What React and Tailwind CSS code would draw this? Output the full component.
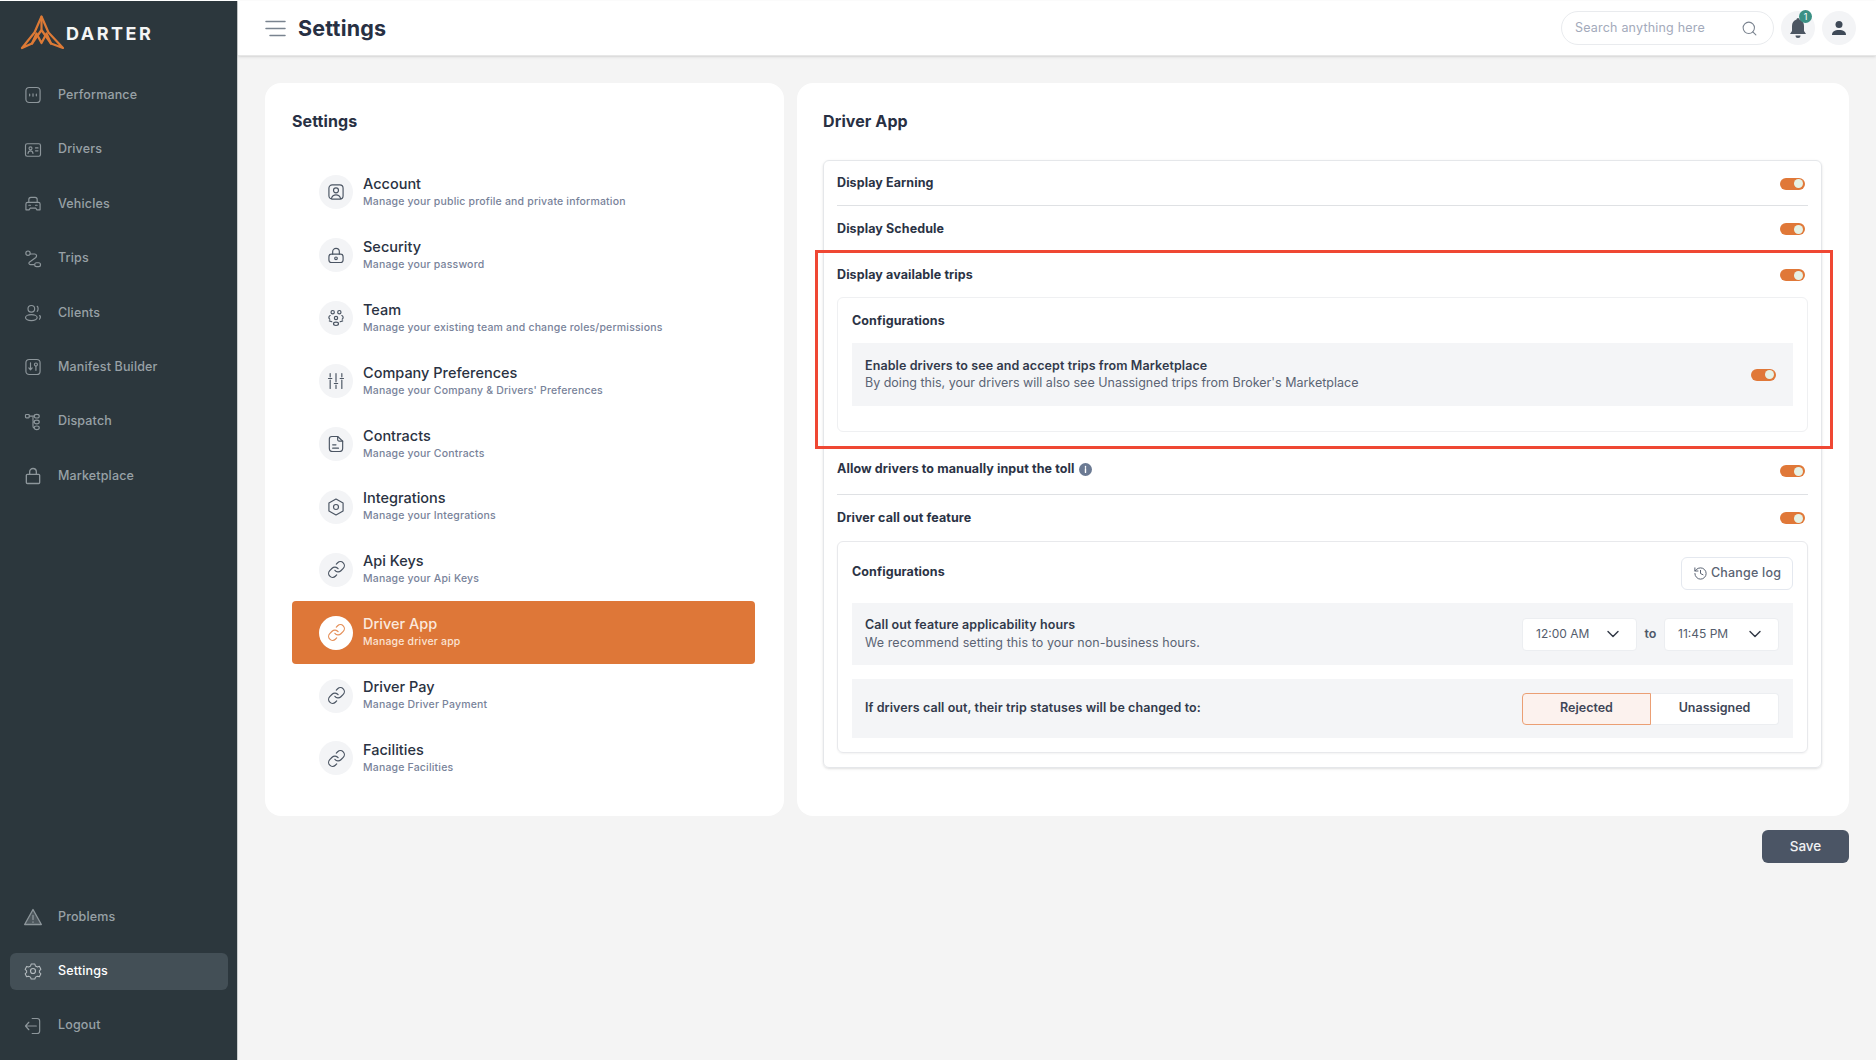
import React from "react";
import { Search, ChevronDown, History, Link } from "lucide-react";

const S = ({ children, size = 20, className = "", sw = 1.4 }) => (
  <svg width={size} height={size} viewBox="0 0 24 24" fill="none" stroke="currentColor" strokeWidth={sw} strokeLinecap="round" strokeLinejoin="round" className={className}>
    {children}
  </svg>
);

const Logo = () => (
  <svg width="44" height="36" viewBox="0 0 44 36" fill="none" stroke="#dd7a36" strokeWidth="2.2" strokeLinejoin="round" strokeLinecap="round">
    <path d="M2 33 L14.500 17.500 L21.500 1.500 L28.500 17.500 L43 33 L31 28.500 L21.500 15 L12 28.500 Z" />
    <path d="M12 28.500 L16.500 18.500 L21.500 28 L26.500 18.500 L31 28.500" />
    <path d="M21.500 2 L21.500 14" />
  </svg>
);

const navIcons = {
  Performance: <S><rect x="3.5" y="3" width="17" height="18" rx="4" /><path d="M8 11v2M12 10.5v3M16 11v2" /></S>,
  Drivers: <S><rect x="3" y="4.5" width="18" height="15" rx="2" /><circle cx="9" cy="10" r="1.8" /><path d="M6 16c.3-2 1.5-3 3-3s2.7 1 3 3M15 9.5h3M15 13h3" /></S>,
  Vehicles: <S><path d="M7 10V6.500C7 5 8 4 9.500 4h5C16 4 17 5 17 6.500V10" /><path d="M3.500 12c0-1.200.8-2 2-2h13c1.200 0 2 .8 2 2v7h-4l-1-2h-7l-1 2h-4z" /><path d="M7 13.500h2M15 13.500h2" /></S>,
  Trips: <S><circle cx="6" cy="5" r="2.600" /><rect x="14" y="16.500" width="7" height="4.600" rx="2.300" /><path d="M9 6h5c2.500 0 3 3 1 4.500l-7 5c-1.500 1.200-1 3.300 1 3.300h4" /></S>,
  Clients: <S><circle cx="10" cy="7" r="4" /><ellipse cx="10" cy="17.500" rx="7" ry="3.600" /><path d="M17 4c1.500 1 1.500 4.500 0 6M20 15c1 1 1 3-.2 4.500" /></S>,
  "Manifest Builder": <S><rect x="3.500" y="3" width="17" height="18" rx="4" /><path d="M9 7v8M7 13l2 2.500 2-2.500" /><circle cx="15.500" cy="9" r="1.800" /><path d="M15.500 11v5" /></S>,
  Dispatch: <S><rect x="3" y="3" width="4.500" height="4" rx="1" /><path d="M7.500 5h6" /><ellipse cx="16.500" cy="5" rx="3" ry="2.200" /><ellipse cx="16.500" cy="12" rx="3" ry="2.200" /><ellipse cx="16.500" cy="19" rx="3" ry="2.200" /><path d="M12 6v5c0 .8.5 1 1.500 1M12 12v5c0 1 .5 2 1.500 2" /></S>,
  Marketplace: <S sw={1.6}><path d="M8 10V7a4 4 0 0 1 8 0v3" /><rect x="4" y="10" width="16" height="11" rx="1.200" /></S>,
  Problems: <S sw={1.6}><path d="M12 3 22 21H2z" fill="currentColor" fillOpacity="0.35" /><path d="M12 10v5M12 18v.4" /></S>,
  Settings: <S><path d="M9.500 3h5l.8 2.600 2.600 1.200 2.600-.8 2 4-2 1.900v2.200l2 1.900-2 4-2.600-.8-2.600 1.200-.8 2.600h-5l-.8-2.600-2.600-1.200-2.600.8-2-4 2-1.900V12l-2-1.900 2-4 2.600.8 2.600-1.200z" transform="translate(1.200 1) scale(.9)" /><circle cx="12" cy="12" r="3" /></S>,
  Logout: <S><path d="M11 3h6c2 0 3 1 3 3v12c0 2-1 3-3 3h-6" /><path d="M16 12H3M7 7.500 3 12l4 4.500" /></S>,
};

const NavItem = ({ label, active }) => (
  <div className="h-[54.45px] flex items-center">
    <div className={`w-[218px] h-[37px] ml-[10px] rounded-md flex items-center pl-[13px] gap-[15px] ${active ? "bg-[#434f56] text-white" : "text-[#98a1a6]"}`}>
      <span className={active ? "text-[#b4bbbf]" : "text-[#8d969b]"}>{navIcons[label]}</span>
      <span className="text-[12.5px] font-medium tracking-[0.15px]">{label}</span>
    </div>
  </div>
);

const rowIcons = {
  Account: <S><rect x="3.500" y="3.500" width="17" height="17" rx="4" /><circle cx="12" cy="10" r="3" /><path d="M6.500 20c.8-3 2.800-4.500 5.500-4.500s4.700 1.500 5.500 4.500" /></S>,
  Security: <S><path d="M8 11V8a4 4 0 0 1 8 0v3" /><rect x="3.500" y="11" width="17" height="10" rx="3" /><circle cx="12" cy="16" r="1.600" /></S>,
  Team: <S><circle cx="8" cy="5" r="2" /><circle cx="16" cy="5" r="2" /><circle cx="12" cy="12" r="2" /><ellipse cx="12" cy="19" rx="3" ry="2" /><path d="M5 9C3 10 3 12 4.500 13.500M19 9c2 1 2 3 .5 4.500M4 15.500l3 1M20 15.500l-3 1" /></S>,
  "Company Preferences": <S><path d="M5 3v4M5 11v10M12 3v10M12 17v4M19 3v4M19 11v10M3 9h4M10 15h4M17 9h4" /></S>,
  Contracts: <S><path d="M7 3h7v4c0 1 .5 1.500 1.500 1.500H20V17c0 2.500-1.500 4-4 4H8c-2.500 0-4-1.500-4-4V6c0-2 1-3 3-3z" /><path d="M14 3l6 5.500M8 13h4M8 17h7" /></S>,
  Integrations: <S><path d="M12 2.500 20.500 7.200v9.600L12 21.500l-8.500-4.700V7.200z" /><circle cx="12" cy="12" r="3" /></S>,
};

const settings = [
  ["Account", "Manage your public profile and private information"],
  ["Security", "Manage your password"],
  ["Team", "Manage your existing team and change roles/permissions"],
  ["Company Preferences", "Manage your Company & Drivers' Preferences"],
  ["Contracts", "Manage your Contracts"],
  ["Integrations", "Manage your Integrations"],
  ["Api Keys", "Manage your Api Keys"],
  ["Driver App", "Manage driver app", true],
  ["Driver Pay", "Manage Driver Payment"],
  ["Facilities", "Manage Facilities"],
];

const SettingRow = ({ title, sub, active }) => (
  <div className={`h-[62.9px] flex items-center pl-[27px] gap-[10px] rounded ${active ? "bg-[#de7738] text-white" : ""}`}>
    <div className={`w-[34px] h-[34px] rounded-full flex items-center justify-center ${active ? "bg-white text-[#e5905a]" : "bg-[#f3f4f6] text-[#4b5563]"}`}>
      {rowIcons[title] || <Link size={19} strokeWidth={1.5} />}
    </div>
    <div className="flex flex-col">
      <span className={`text-[14.5px] leading-[18px] font-medium tracking-[0px] ${active ? "text-[#fbe9dd]" : "text-[#2a3242]"}`}>{title}</span>
      <span className={`text-[10.5px] leading-[17px] font-medium tracking-[0.18px] ${active ? "text-[#fbe3d3]" : "text-[#79839a]"}`}>{sub}</span>
    </div>
  </div>
);

const Toggle = () => (
  <div className="w-[25.5px] h-3 rounded-full bg-[#e07838] flex items-center justify-end pr-[2px] shrink-0">
    <div className="w-[9px] h-[9px] rounded-full bg-[#e6f2e6]" />
  </div>
);

const Label = ({ children, className = "" }) => (
  <span className={`text-[12.5px] font-bold text-[#2b3345] tracking-[0.1px] ${className}`}>{children}</span>
);

const Select = ({ value, w }) => (
  <div className={`${w} h-[33px] bg-white rounded border border-[#eceef1] flex items-center justify-between pl-[13px] pr-[13px] text-[12px] text-[#545d6c]`}>
    <span>{value}</span>
    <ChevronDown size={20} strokeWidth={1.7} className="text-[#333a47]" />
  </div>
);

export default function App() {
  return (
    <div className="relative w-[1876px] h-[1062px] overflow-hidden bg-white" style={{ fontFamily: "Inter, 'Liberation Sans', sans-serif" }}>
      <div className="flex h-[1059px] mt-px">
        <aside className="w-[238px] shrink-0 bg-[#2c373d] flex flex-col justify-between border-r border-[#c9cccd]">
          <div>
            <div className="h-[67px] flex items-center pl-[20px] pb-[3px] gap-[2px]">
              <Logo />
              <span className="text-[18px] font-bold text-[#f4f5f5] tracking-[2.500px] mt-[1px]">DARTER</span>
            </div>
            {["Performance", "Drivers", "Vehicles", "Trips", "Clients", "Manifest Builder", "Dispatch", "Marketplace"].map((l) => (
              <NavItem key={l} label={l} />
            ))}
          </div>
          <div className="pb-[7px]">
            <NavItem label="Problems" />
            <NavItem label="Settings" active />
            <NavItem label="Logout" />
          </div>
        </aside>

        <div className="flex-1 flex flex-col bg-[#f4f4f4] min-w-0">
          <header className="h-[55px] shrink-0 bg-white border-b border-[#e7e7e7] shadow-sm flex items-center pl-[27px] pr-[20px]">
            <svg width="21" height="17" viewBox="0 0 21 17" stroke="#79838f" strokeWidth="1.5" strokeLinecap="round">
              <path d="M1 1.500h19M1 8.500h19M5 15.500h15" />
            </svg>
            <h1 className="ml-[12px] mt-[1px] text-[21.5px] font-bold text-[#283043] tracking-[0.2px]">Settings</h1>
            <div className="ml-auto flex items-center gap-[7px]">
              <div className="w-[213px] h-[34px] rounded-full border border-[#e9ebee] flex items-center justify-between pl-[13px] pr-[15px] text-[12.5px] text-[#a3aabb] tracking-[0.2px]">
                <span>Search anything here</span>
                <Search size={17} strokeWidth={1.5} className="text-[#7b8490]" />
              </div>
              <div className="relative w-[34px] h-[34px] rounded-full bg-[#f3f4f6] flex items-center justify-center">
                <svg width="20" height="22" viewBox="0 0 20 22" fill="#4c5662">
                  <path d="M10 1a1.500 1.500 0 0 1 1.500 1.500C14.500 3.300 16 6 16 9v5l2 3H2l2-3V9c0-3 1.500-5.700 4.500-6.500A1.500 1.500 0 0 1 10 1z" />
                  <path d="M7.500 18.500h5a2.500 2.500 0 0 1-5 0z" />
                </svg>
                <span className="absolute -top-[1px] right-[3px] w-[13px] h-[13px] rounded-full bg-[#3a9084] text-white text-[9px] leading-[13px] text-center">1</span>
              </div>
              <div className="w-[34px] h-[34px] rounded-full bg-[#f3f4f6] flex items-center justify-center">
                <svg width="16" height="16" viewBox="0 0 16 16" fill="#3e4957">
                  <circle cx="8" cy="4.500" r="3.500" />
                  <path d="M1 15c0-3.500 2.500-5 7-5s7 1.500 7 5z" />
                </svg>
              </div>
            </div>
          </header>

          <main className="flex-1 px-[27px] pt-[27px]">
            <div className="grid grid-cols-[519px_1fr] gap-[13px] h-[733px]">
              <section className="bg-white rounded-2xl pl-[27px] pr-[29px] pt-[27px]">
                <h2 className="text-[16px] leading-[22px] font-bold text-[#283043] tracking-[0.1px]">Settings</h2>
                <div className="mt-[29px]">
                  {settings.map(([t, s, a]) => (
                    <SettingRow key={t} title={t} sub={s} active={a} />
                  ))}
                </div>
              </section>

              <section className="bg-white rounded-2xl pl-[26px] pr-[27px] pt-[27px]">
                <h2 className="text-[16px] leading-[22px] font-bold text-[#283043] tracking-[0.1px]">Driver App</h2>
                <div className="mt-[28px] border border-[#e5e7ea] rounded-md shadow-sm px-[13px] h-[608px]">
                  <div className="h-[45px] flex items-center justify-between border-b border-[#dfe1e4] pr-[3px] pt-[1px]">
                    <Label>Display Earning</Label>
                    <Toggle />
                  </div>
                  <div className="h-[46px] flex items-center justify-between pr-[3px]">
                    <Label>Display Schedule</Label>
                    <Toggle />
                  </div>
                  <div className="h-[45px] flex items-center justify-between pr-[3px] pt-[1px]">
                    <Label>Display available trips</Label>
                    <Toggle />
                  </div>
                  <div className="h-[135px] border border-[#eff0f2] rounded-md px-[14px]">
                    <div className="h-[45px] flex items-center pt-[1px]"><Label>Configurations</Label></div>
                    <div className="h-[63px] bg-[#f4f5f7] flex items-center justify-between pl-[13px] pr-[17px]">
                      <div className="flex flex-col">
                        <span className="text-[12.5px] leading-[18px] font-semibold text-[#323a4b] tracking-[0.09px]">Enable drivers to see and accept trips from Marketplace</span>
                        <span className="text-[12.5px] leading-[18px] text-[#5b6474] -mt-px">By doing this, your drivers will also see Unassigned trips from Broker's Marketplace</span>
                      </div>
                      <Toggle />
                    </div>
                  </div>
                  <div className="h-[63px] border-b border-[#dfe1e4] flex items-center justify-between pt-[16px] pr-[3px]">
                    <div className="flex items-center gap-[5px] -mt-[3px]">
                      <Label>Allow drivers to manually input the toll</Label>
                      <svg width="13" height="13" viewBox="0 0 13 13">
                        <circle cx="6.500" cy="6.500" r="6.500" fill="#6b7a93" />
                        <path d="M6.500 5.800v3.600M6.500 3.400v.8" stroke="#fff" strokeWidth="1.400" strokeLinecap="round" />
                      </svg>
                    </div>
                    <Toggle />
                  </div>
                  <div className="h-[46px] flex items-center justify-between pr-[3px]">
                    <Label>Driver call out feature</Label>
                    <Toggle />
                  </div>
                  <div className="h-[212px] border border-[#e8e9ec] rounded-md px-[14px] shadow-xs">
                    <div className="h-[61px] flex items-center justify-between">
                      <Label>Configurations</Label>
                      <div className="w-[112px] h-[33px] mt-[2px] border border-[#e4e8ef] rounded-md flex items-center justify-center gap-[3px] text-[12.5px] font-medium text-[#5a6373] tracking-[0.2px]">
                        <History size={15} strokeWidth={1.6} />
                        <span>Change log</span>
                      </div>
                    </div>
                    <div className="h-[62px] bg-[#f4f5f7] flex items-center justify-between pl-[13px] pr-[14px]">
                      <div className="flex flex-col">
                        <span className="text-[12.5px] leading-[18px] font-semibold text-[#323a4b] tracking-[0.09px]">Call out feature applicability hours</span>
                        <span className="text-[12.5px] leading-[18px] text-[#5b6474] tracking-[0.08px]">We recommend setting this to your non-business hours.</span>
                      </div>
                      <div className="flex items-center">
                        <Select value="12:00 AM" w="w-[115px]" />
                        <span className="w-[27px] text-center text-[12.5px] font-semibold text-[#4f5869]">to</span>
                        <Select value="11:45 PM" w="w-[115px]" />
                      </div>
                    </div>
                    <div className="h-[59px] mt-[14px] bg-[#f4f5f7] flex items-center justify-between pl-[13px] pr-[14px]">
                      <span className="text-[12.5px] font-semibold text-[#323a4b] tracking-[0.08px]">If drivers call out, their trip statuses will be changed to:</span>
                      <div className="w-[257px] h-[32px] flex text-[12.5px] font-semibold text-[#3e4657]">
                        <div className="w-[129px] bg-[#fcf2ee] border border-[#eb9f74] rounded-l flex items-center justify-center">Rejected</div>
                        <div className="flex-1 bg-white border-y border-r border-[#eceef1] rounded-r flex items-center justify-center">Unassigned</div>
                      </div>
                    </div>
                  </div>
                </div>
              </section>
            </div>
            <div className="flex justify-end mt-[14px]">
              <button className="w-[87px] h-[33px] bg-[#4b5565] rounded-md text-[13.5px] font-medium text-[#f0f1f3]">Save</button>
            </div>
          </main>
        </div>
      </div>
      <div className="absolute left-[815px] top-[250px] w-[1018px] h-[199px] border-[3px] border-[#ef4733] pointer-events-none" />
    </div>
  );
}
